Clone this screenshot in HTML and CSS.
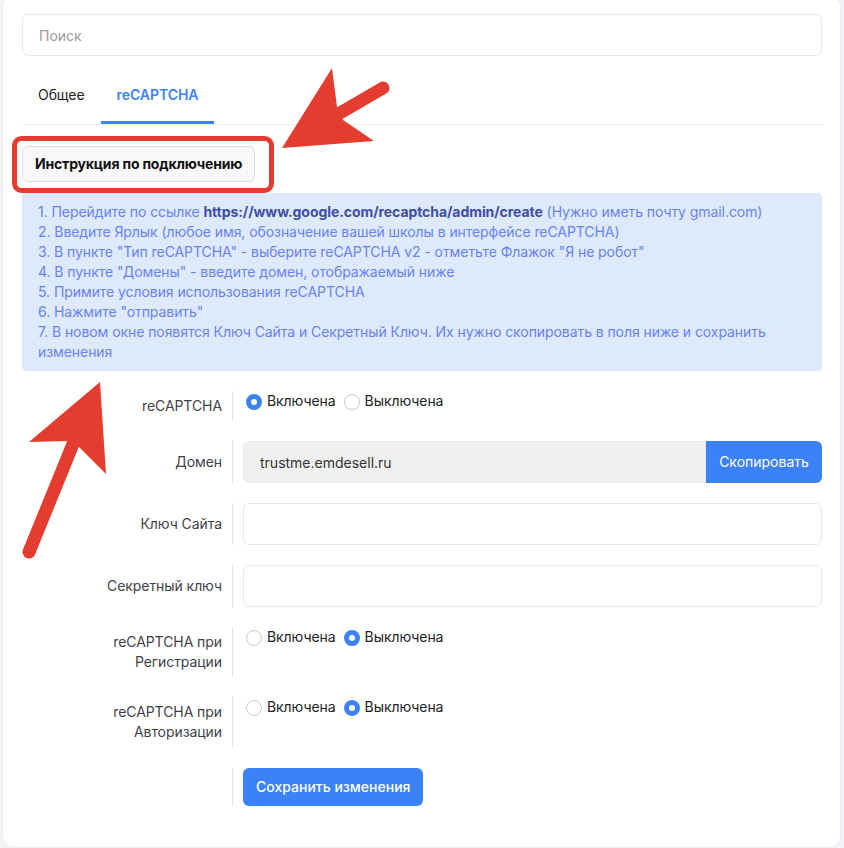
FILE: index.html
```html
<!DOCTYPE html>
<html lang="ru">

<head>
	<meta charset="UTF-8">
	<meta name="viewport" content="width=device-width, initial-scale=1.0">
	<title>Настройки reCAPTCHA</title>
	<link rel="stylesheet" href="styles.css">
</head>

<body>
	<div class="card">
		<input class="search" type="text" placeholder="Поиск">

		<nav class="tabs">
			<a class="tab">Общее</a>
			<a class="tab active">reCAPTCHA</a>
		</nav>

		<button class="btn-light" type="button">Инструкция по подключению</button>

		<div class="info">
			1. Перейдите по ссылке <b>https://www.google.com/recaptcha/admin/create</b> (Нужно иметь почту gmail.com)<br>
			2. Введите Ярлык (любое имя, обозначение вашей школы в интерфейсе reCAPTCHA)<br>
			3. В пункте "Тип reCAPTCHA" - выберите reCAPTCHA v2 - отметьте Флажок "Я не робот"<br>
			4. В пункте "Домены" - введите домен, отображаемый ниже<br>
			5. Примите условия использования reCAPTCHA<br>
			6. Нажмите "отправить"<br>
			7. В новом окне появятся Ключ Сайта и Секретный Ключ. Их нужно скопировать в поля ниже и сохранить изменения
		</div>

		<form class="settings">
			<div class="row">
				<div class="label">reCAPTCHA</div>
				<div class="field radios">
					<span class="radio checked"></span><span class="radio-text">Включена</span>
					<span class="radio"></span><span class="radio-text">Выключена</span>
				</div>
			</div>

			<div class="row">
				<div class="label">Домен</div>
				<div class="field group">
					<input class="input readonly" type="text" value="trustme.emdesell.ru" readonly>
					<button class="btn-primary btn-append" type="button">Скопировать</button>
				</div>
			</div>

			<div class="row">
				<div class="label">Ключ Сайта</div>
				<div class="field"><input class="input" type="text"></div>
			</div>

			<div class="row">
				<div class="label">Секретный ключ</div>
				<div class="field"><input class="input" type="text"></div>
			</div>

			<div class="row">
				<div class="label">reCAPTCHA при Регистрации</div>
				<div class="field radios">
					<span class="radio"></span><span class="radio-text">Включена</span>
					<span class="radio checked"></span><span class="radio-text">Выключена</span>
				</div>
			</div>

			<div class="row">
				<div class="label">reCAPTCHA при Авторизации</div>
				<div class="field radios">
					<span class="radio"></span><span class="radio-text">Включена</span>
					<span class="radio checked"></span><span class="radio-text">Выключена</span>
				</div>
			</div>

			<div class="row">
				<div class="label"></div>
				<div class="field"><button class="btn-primary btn-save" type="button">Сохранить изменения</button></div>
			</div>
		</form>
	</div>

	<!-- пометки поверх скриншота -->
	<svg class="marks" width="844" height="848" viewBox="0 0 844 848">
		<rect x="14.5" y="138.5" width="257" height="52" rx="7" fill="none" stroke="#e43d30" stroke-width="5" />
		<polygon points="282,148 332,68 337,107 343,120 374,141" fill="#e43d30" />
		<line x1="340" y1="113" x2="383" y2="88" stroke="#e43d30" stroke-width="13" stroke-linecap="round" />
		<polygon points="100,382 29,442 68,441 79,447 106,474" fill="#e43d30" />
		<line x1="73" y1="444" x2="29" y2="552" stroke="#e43d30" stroke-width="13" stroke-linecap="round" />
	</svg>
</body>

</html>
```

FILE: styles.css
```css
* {
	box-sizing: border-box;
}

body {
	margin: 0;
	background: #f2f2f8;
	font-family: Inter, "Noto Sans", sans-serif;
	font-size: 14px;
	line-height: 20px;
	letter-spacing: -0.07px;
	color: #222;
	position: relative;
}

.card {
	margin: -6px 3px 0 2px;
	padding: 19px 18px 41px 19px;
	background: #fff;
	border: 1px solid #ececf1;
	border-radius: 12px;
}

.search {
	display: block;
	width: 100%;
	height: 42px;
	padding: 0 16px;
	border: 1px solid #e8e8ee;
	border-radius: 6px;
	font: inherit;
	color: #222;
}

.search::placeholder {
	color: #9a9a9f;
}

.tabs {
	display: flex;
	margin-top: 14px;
	border-bottom: 1px solid #ececf1;
}

.tab {
	padding: 15px 16px 16px;
	border-bottom: 3px solid transparent;
	color: #222;
}

.tab.active {
	color: #3b82f6;
	font-weight: 600;
	border-bottom-color: #3b82f6;
}

.btn-light {
	display: block;
	margin-top: 21px;
	padding: 7px 12px;
	background: #f8f8fa;
	border: 1px solid #dcdce2;
	border-radius: 6px;
	font: inherit;
	font-weight: 700;
	letter-spacing: -0.17px;
	color: #111;
}

.info {
	margin-top: 11px;
	padding: 9px 16px;
	background: #dfe9fc;
	border-radius: 4px;
	color: #6783f0;
}

.info b {
	color: #3d4ea8;
	font-weight: 700;
}

.settings {
	display: flex;
	flex-direction: column;
	gap: 20px;
	margin-top: 20px;
}

.row {
	display: grid;
	grid-template-columns: 210px 1fr;
}

.row:last-child {
	margin-top: 1px;
}

.label {
	align-self: center;
	padding: 5px 10px 5px 30px;
	text-align: right;
	color: #3f3f4a;
}

.field {
	border-left: 1px solid #e2e2e6;
	padding-left: 10px;
}

.radios {
	display: flex;
	align-items: flex-start;
	color: #222;
}

.radio {
	width: 16px;
	height: 16px;
	margin: 3px 5px 0 3px;
	border: 1px solid #c9c9ce;
	border-radius: 50%;
	background: #fff;
}

.radio.checked {
	border: 5px solid #3b82f6;
}

.radio-text {
	margin-right: 5px;
}

.input {
	display: block;
	width: 100%;
	height: 42px;
	padding: 0 16px;
	border: 1px solid #e8e8ee;
	border-radius: 6px;
	font: inherit;
	color: #333;
}

.group {
	display: flex;
}

.input.readonly {
	background: #f0f0f0;
	border-radius: 6px 0 0 6px;
}

.btn-primary {
	border: none;
	border-radius: 6px;
	background: #3b82f6;
	color: #fff;
	font: inherit;
}

.btn-append {
	flex: none;
	width: 116px;
	border-radius: 0 6px 6px 0;
}

.btn-save {
	height: 38px;
	padding: 0 13px;
	font-weight: 500;
}

.marks {
	position: absolute;
	top: 0;
	left: 0;
	pointer-events: none;
}
```
